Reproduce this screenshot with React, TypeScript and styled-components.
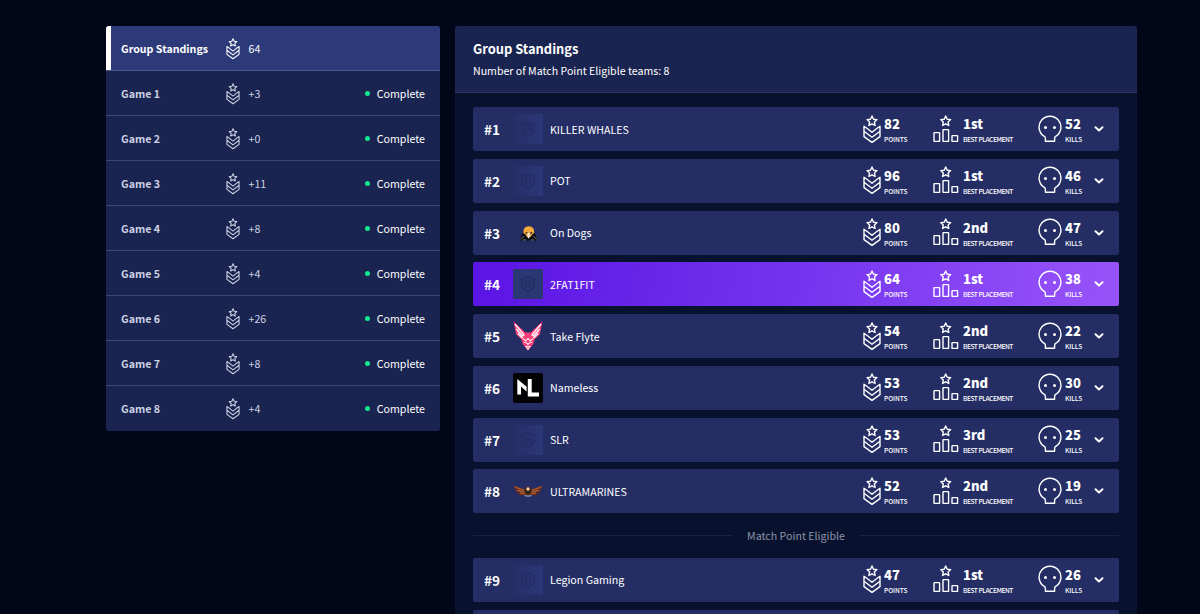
import React from 'react';
import styled, { createGlobalStyle, css } from 'styled-components';

const GlobalStyle = createGlobalStyle`
  * { box-sizing: border-box; }
  html, body { margin: 0; padding: 0; }
  body {
    height: 614px;
    overflow: hidden;
    background: #010718;
    color: #fff;
    font-family: 'Source Sans Pro', 'Noto Sans CJK SC', sans-serif;
  }
`;

const Page = styled.main`
  display: flex;
  align-items: flex-start;
  gap: 15px;
  height: 614px;
  padding: 26px 63px 0 106px;
  overflow: hidden;
`;

const Sidebar = styled.nav`
  flex: none;
  width: 334px;
  border-radius: 3px;
  overflow: hidden;
  background: #1a2450;
`;

const Tab = styled.div<{ $active?: boolean }>`
  display: flex;
  align-items: center;
  height: 45px;
  padding: 1px 15px 0;
  font-size: 10.65px;
  line-height: 18px;
  color: #cdd1e4;
  border-bottom: 1px solid #3c4775;
  &:last-child {
    padding-top: 0;
    border-bottom: 0;
  }
  ${(p) => p.$active && css`
    color: #fff;
    background: #2d3a7a;
    box-shadow: inset 5px 0 #fff;
    border-bottom-color: #4a568c;
  `}
`;

const TabName = styled.span`
  width: 105px;
  font-weight: 700;
  white-space: nowrap;
`;

const TabScore = styled.span`
  flex: 1;
  padding-left: 8.5px;
`;

const Status = styled.span`
  display: flex;
  align-items: center;
  gap: 6.5px;
  color: #fff;
  &::before {
    content: '';
    width: 5.5px;
    height: 5.5px;
    border-radius: 50%;
    background: #12e68e;
  }
`;

const Panel = styled.section`
  flex: none;
  width: 682px;
  height: 620px;
  border-radius: 3px 3px 0 0;
  overflow: hidden;
  background: #08122e;
`;

const PanelHeader = styled.header`
  height: 67px;
  padding: 12.6px 18px 0;
  background: #1a2450;
  border-bottom: 1px solid #2b376b;
`;

const Title = styled.h1`
  margin: 0;
  font-size: 12.9px;
  line-height: 20px;
  font-weight: 700;
`;

const Subtitle = styled.p`
  margin: 3px 0 0;
  font-size: 10.6px;
  line-height: 18px;
`;

const List = styled.div`
  display: flex;
  flex-direction: column;
  gap: 7.75px;
  padding: 14px 18px 0;
`;

const TeamRow = styled.div<{ $active?: boolean }>`
  display: flex;
  flex: none;
  align-items: center;
  height: 44px;
  padding: 0 15px 0 11px;
  border-radius: 2px;
  background: ${(p) => (p.$active ? 'linear-gradient(100deg, #5a14e4, #7434ee 50%, #9854fa)' : '#242e65')};
`;

const Rank = styled.span`
  width: 29px;
  font-size: 13.6px;
  line-height: 20px;
  font-weight: 700;
`;

const Logo = styled.svg`
  flex: none;
  width: 30px;
  height: 30px;
`;

const TeamName = styled.span`
  flex: 1;
  padding: 1px 0 0 7px;
  font-size: 10.65px;
  line-height: 18px;
`;

const Stat = styled.div<{ $width: number; $gap?: number }>`
  display: flex;
  align-items: center;
  gap: ${(p) => p.$gap ?? 3}px;
  width: ${(p) => p.$width}px;
`;

const StatText = styled.div`
  flex: none;
  padding-top: 2px;
`;

const Value = styled.div`
  font-size: 13px;
  line-height: 16px;
  font-weight: 900;
`;

const Label = styled.div<{ $tight?: boolean }>`
  margin-top: 2px;
  font-size: 6.6px;
  line-height: 10px;
  font-weight: 500;
  letter-spacing: ${(p) => (p.$tight ? -0.45 : -0.1)}px;
  white-space: nowrap;
`;

const Divider = styled.div`
  display: flex;
  align-items: center;
  gap: 15px;
  height: 29px;
  font-size: 10.65px;
  line-height: 18px;
  color: #8d93a8;
  &::before, &::after {
    content: '';
    flex: 1;
    height: 1px;
    background: #18213f;
  }
`;

const Icon = styled.svg<{ $weight?: number }>`
  flex: none;
  fill: none;
  stroke: currentColor;
  stroke-width: ${(p) => p.$weight ?? 1.4};
  stroke-linejoin: round;
  stroke-linecap: round;
`;

const STAR = 'M0-5 1.5-1.8 5-1.4 2.4 1 3.1 4.5 0 2.8-3.1 4.5-2.4 1-5-1.4-1.5-1.8Z';

const RankIcon = ({ small }: { small?: boolean }) => (
  <Icon width={small ? 14 : 18} height={small ? 22 : 29} viewBox="0 0 18 29">
    <path d={STAR} transform="translate(9 6)" />
    <path d="M4.5 13.7 1 11.2V21.6L9 27.4 17 21.6V11.2L13.5 13.7M4.5 13.7 9 17.2 13.5 13.7M1 16.2 9 22.2 17 16.2" />
  </Icon>
);

const PodiumIcon = () => (
  <Icon width="26" height="29" viewBox="0 0 26 29">
    <path d={STAR} transform="translate(12.7 6)" />
    <rect x="1" y="17.6" width="5.6" height="8.8" rx=".5" />
    <rect x="10" y="14.6" width="5.6" height="11.8" rx=".5" />
    <rect x="19" y="20.6" width="5.6" height="5.8" rx=".5" />
  </Icon>
);

const SkullIcon = () => (
  <Icon width="24" height="29" viewBox="0 0 24 29">
    <path d="M7.4 26.3V23.4Q7.4 22.1 6.3 21.4A10.9 10.9 0 1 1 17.7 21.4Q16.6 22.1 16.6 23.4V26.3Z" />
    <circle cx="7.5" cy="12.4" r="1.5" fill="currentColor" stroke="none" />
    <circle cx="16.5" cy="12.4" r="1.5" fill="currentColor" stroke="none" />
  </Icon>
);

const Arrow = () => (
  <Icon width="10" height="6" viewBox="0 0 10 6" $weight={1.9}>
    <path d="M1.5 1.2 5 4.5 8.5 1.2" />
  </Icon>
);

type LogoKind = 'default' | 'muted' | 'dogs' | 'flyte' | 'nameless' | 'ultra';

const TeamLogo = ({ kind }: { kind: LogoKind }) => {
  switch (kind) {
    case 'dogs':
      return (
        <Logo viewBox="0 0 30 30">
          <path d="M7 22.5 9 16 12.5 12.5H19.5L22.3 16 24.3 22.5Z" fill="#0b0c14" />
          <path d="M10.3 15Q10 8.5 15.8 8.3 21.6 8.5 21.2 15L18.8 17 17.5 19H14L12.6 16.5Z" fill="#f4a93a" />
          <path d="M12 14 15 14.8 14 16.2ZM16.7 14.8 19.6 14 18 16.5Z" fill="#15131a" />
          <path d="M14.3 15H17.2L16.6 19 15.6 20.7 14.5 19Z" fill="#f6e6cf" />
          <path d="M8 21.5 11 18M23.5 21.5 20.5 18M10 21.9H13M18 21.9H21" stroke="#b1a78e" strokeWidth=".7" />
        </Logo>
      );
    case 'flyte':
      return (
        <Logo viewBox="0 0 30 30">
          <path d="M.6.6 12.5 11.5H17.5L29.4.6 27 13 21.5 18.5 20.5 23 15 29.5 9.5 23 8.5 18.5 3 13Z" fill="#fa3d76" />
          <path d="M2 3.2 10.5 13 11 15.2M28 3.2 19.5 13 19 15.2M3.2 8 9.8 15.2M26.8 8 20.2 15.2M4.7 12.5 9.5 17M25.3 12.5 20.5 17" fill="none" stroke="#fff" strokeWidth="1.3" />
          <path d="M10 17.5 12.6 20 15 17.5 17.4 20 20 17.5M11 21.5 13.6 21.7 15 23.5 16.4 21.7 19 21.5M13 25.5H17L15 28.3Z" fill="none" stroke="#ffe3eb" strokeWidth="1.1" />
        </Logo>
      );
    case 'nameless':
      return (
        <Logo viewBox="0 0 30 30">
          <rect width="30" height="30" rx="2" fill="#020204" />
          <path d="M4.3 21.5V6L13.6 13.8V18.4L8 13.6V21.5ZM14.8 6H18.7V19.4H26V23.4H14.8Z" fill="#fff" />
        </Logo>
      );
    case 'ultra':
      return (
        <Logo viewBox="0 0 30 30">
          <path d="M.5 9.5 11 13 13.5 11H16.5L19 13 29.5 9.5 27.5 15 22.5 19.5 17.5 19.3 15 20.5 12.5 19.3 7.5 19.5 3 15.5Z" fill="#6b2c20" />
          <path d="M1.5 10.8 11.5 14.5M4 14 11.5 16.2M7 17 12 17.6M28.5 10.8 18.5 14.5M26 14 18.5 16.2M23 17 18 17.6" stroke="#bd733c" strokeWidth=".9" />
          <circle cx="15" cy="14.7" r="3.6" fill="#3a1f1d" />
          <circle cx="15" cy="13" r="1.7" fill="#f1d3a1" />
          <path d="M11.5 19.4Q15 20.8 18.5 19.4" fill="none" stroke="#7eb4d2" strokeWidth="1.1" />
        </Logo>
      );
    default: {
      const muted = kind === 'muted';
      const line = muted ? '#1f2c60' : '#212b62';
      return (
        <Logo viewBox="0 0 30 30">
          <defs>
            <linearGradient id="crest">
              <stop offset="0" stopColor="#252f67" />
              <stop offset="1" stopColor="#2b3777" />
            </linearGradient>
          </defs>
          <rect width="30" height="30" rx="1" fill={muted ? '#293872' : 'url(#crest)'} />
          <g fill="none" stroke={line}>
            <path d="M15 8Q18 10 21.3 9.8V15Q21 20 15 22.3 9 20 8.7 15V9.8Q12 10 15 8Z" strokeWidth="1.2" />
            <path d="M15 11.5 18 13.2V16.5L15 18.3 12 16.5V13.2ZM12.8 14.8H17.2" />
          </g>
        </Logo>
      );
    }
  }
};

interface Team {
  rank: number;
  name: string;
  logo: LogoKind;
  points: number;
  best: string;
  kills: number;
  active?: boolean;
}

const eligible: Team[] = [
  { rank: 1, name: 'KILLER WHALES', logo: 'default', points: 82, best: '1st', kills: 52 },
  { rank: 2, name: 'POT', logo: 'default', points: 96, best: '1st', kills: 46 },
  { rank: 3, name: 'On Dogs', logo: 'dogs', points: 80, best: '2nd', kills: 47 },
  { rank: 4, name: '2FAT1FIT', logo: 'muted', points: 64, best: '1st', kills: 38, active: true },
  { rank: 5, name: 'Take Flyte', logo: 'flyte', points: 54, best: '2nd', kills: 22 },
  { rank: 6, name: 'Nameless', logo: 'nameless', points: 53, best: '2nd', kills: 30 },
  { rank: 7, name: 'SLR', logo: 'default', points: 53, best: '3rd', kills: 25 },
  { rank: 8, name: 'ULTRAMARINES', logo: 'ultra', points: 52, best: '2nd', kills: 19 },
];

const remaining: Team[] = [
  { rank: 9, name: 'Legion Gaming', logo: 'default', points: 47, best: '1st', kills: 26 },
];

const games = ['+3', '+0', '+11', '+8', '+4', '+26', '+8', '+4'];

const TeamEntry = ({ team }: { team: Team }) => (
  <TeamRow $active={team.active}>
    <Rank>#{team.rank}</Rank>
    <TeamLogo kind={team.logo} />
    <TeamName>{team.name}</TeamName>
    <Stat $width={70}>
      <RankIcon />
      <StatText>
        <Value>{team.points}</Value>
        <Label>POINTS</Label>
      </StatText>
    </Stat>
    <Stat $width={105} $gap={4}>
      <PodiumIcon />
      <StatText>
        <Value>{team.best}</Value>
        <Label $tight>BEST PLACEMENT</Label>
      </StatText>
    </Stat>
    <Stat $width={56}>
      <SkullIcon />
      <StatText>
        <Value>{team.kills}</Value>
        <Label>KILLS</Label>
      </StatText>
    </Stat>
    <Arrow />
  </TeamRow>
);

export default function App() {
  return (
    <>
      <GlobalStyle />
      <Page>
        <Sidebar>
          <Tab $active>
            <TabName>Group Standings</TabName>
            <RankIcon small />
            <TabScore>64</TabScore>
          </Tab>
          {games.map((score, i) => (
            <Tab key={i}>
              <TabName>Game {i + 1}</TabName>
              <RankIcon small />
              <TabScore>{score}</TabScore>
              <Status>Complete</Status>
            </Tab>
          ))}
        </Sidebar>
        <Panel>
          <PanelHeader>
            <Title>Group Standings</Title>
            <Subtitle>Number of Match Point Eligible teams: 8</Subtitle>
          </PanelHeader>
          <List>
            {eligible.map((team) => (
              <TeamEntry key={team.rank} team={team} />
            ))}
            <Divider>Match Point Eligible</Divider>
            {remaining.map((team) => (
              <TeamEntry key={team.rank} team={team} />
            ))}
            <TeamRow />
          </List>
        </Panel>
      </Page>
    </>
  );
}
